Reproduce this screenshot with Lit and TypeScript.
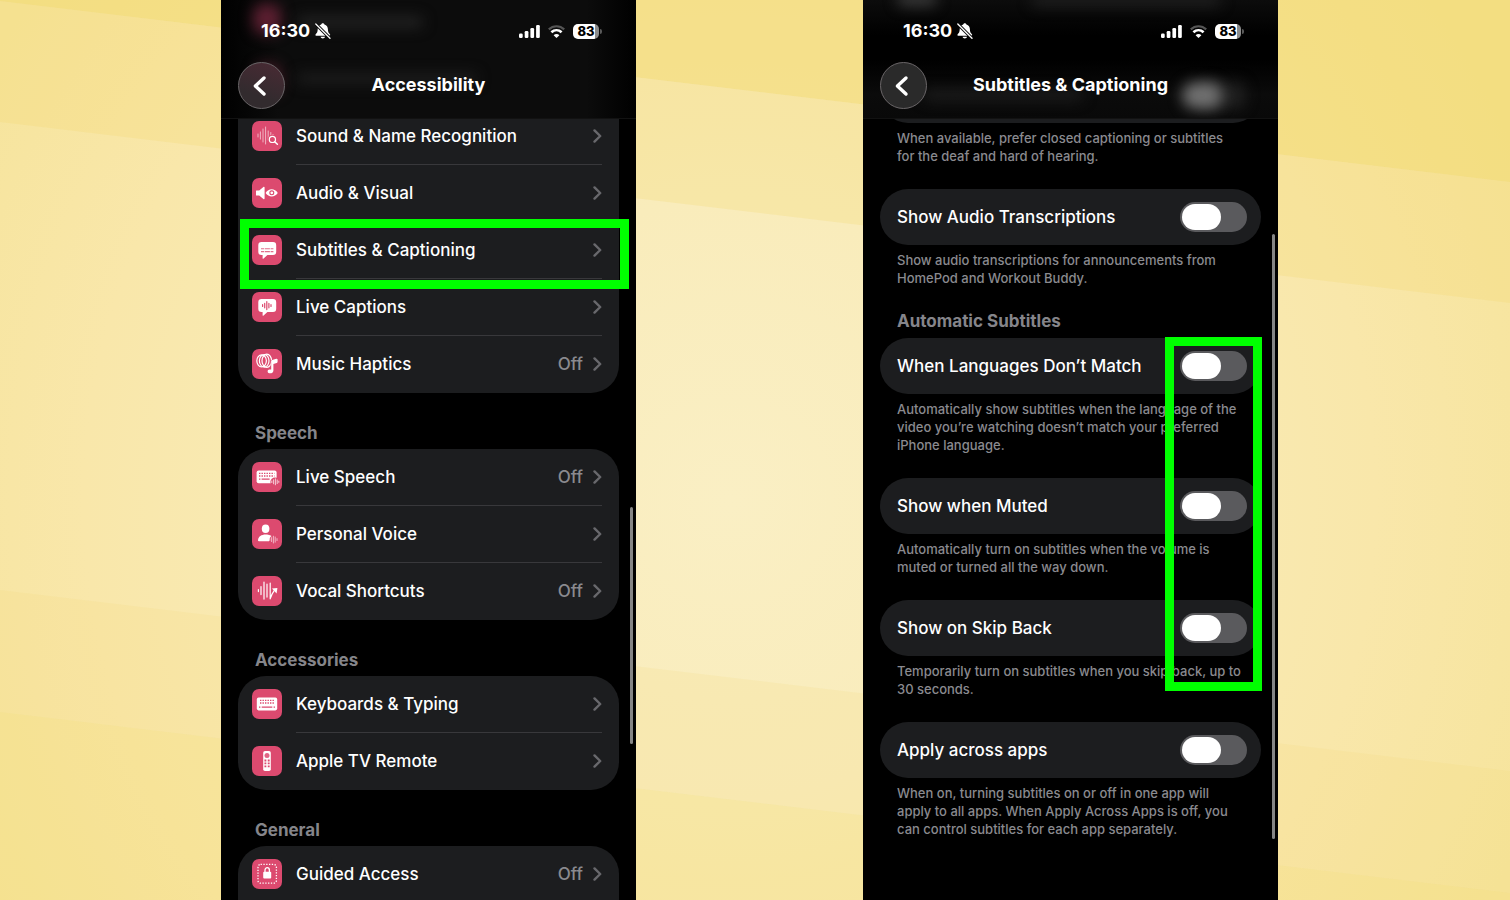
import { LitElement, html, css, svg, nothing } from "lit";
import type { TemplateResult } from "lit";
import { customElement } from "lit/decorators.js";
import { classMap } from "lit/directives/class-map.js";

interface Row {
  icon: string;
  label: string;
  value?: string;
  marked?: boolean;
}

interface Section {
  title?: string;
  rows: Row[];
  continues?: boolean;
}

interface Option {
  id: string;
  label: string;
  note: string;
}

const SECTIONS: Section[] = [
  {
    rows: [
      { icon: "recognition", label: "Sound & Name Recognition" },
      { icon: "audio", label: "Audio & Visual" },
      { icon: "subtitles", label: "Subtitles & Captioning", marked: true },
      { icon: "captions", label: "Live Captions" },
      { icon: "music", label: "Music Haptics", value: "Off" },
    ],
  },
  {
    title: "Speech",
    rows: [
      { icon: "speech", label: "Live Speech", value: "Off" },
      { icon: "voice", label: "Personal Voice" },
      { icon: "vocal", label: "Vocal Shortcuts", value: "Off" },
    ],
  },
  {
    title: "Accessories",
    rows: [
      { icon: "keyboard", label: "Keyboards & Typing" },
      { icon: "remote", label: "Apple TV Remote" },
    ],
  },
  {
    title: "General",
    continues: true,
    rows: [{ icon: "guided", label: "Guided Access", value: "Off" }],
  },
];

const TRANSCRIPTIONS: Option = {
  id: "transcriptions",
  label: "Show Audio Transcriptions",
  note: "Show audio transcriptions for announcements from HomePod and Workout Buddy.",
};

const AUTOMATIC: Option[] = [
  {
    id: "languages",
    label: "When Languages Don’t Match",
    note: "Automatically show subtitles when the language of the video you’re watching doesn’t match your preferred iPhone language.",
  },
  {
    id: "muted",
    label: "Show when Muted",
    note: "Automatically turn on subtitles when the volume is muted or turned all the way down.",
  },
  {
    id: "skip",
    label: "Show on Skip Back",
    note: "Temporarily turn on subtitles when you skip back, up to 30 seconds.",
  },
];

const ACROSS: Option = {
  id: "across",
  label: "Apply across apps",
  note: "When on, turning subtitles on or off in one app will apply to all apps. When Apply Across Apps is off, you can control subtitles for each app separately.",
};

/** Vertical strokes of a sound wave: [x, half height] around a centre line. */
const wave = (bars: number[][], cy: number, width: number, opacity = 1) => svg`
  <path d=${bars.map(([x, h]) => `M${x} ${cy - h}V${cy + h}`).join("")}
    stroke="#fff" stroke-width=${width} stroke-linecap="round" opacity=${opacity} />`;

const keys = (x: number, y: number) => svg`
  <path d=${`M${x} ${y}h14M${x} ${y + 2.6}h14`} stroke="#dc4a6f" stroke-width="1.4" stroke-dasharray="1.4 1.1" />`;

const BUBBLE = "M9.5 7H21a3.2 3.2 0 0 1 3.2 3.2v6.6A3.2 3.2 0 0 1 21 20h-5.6l-3.8 3.6c-.5.5-1 .2-1-.4V20H9.5a3.2 3.2 0 0 1-3.2-3.2v-6.6A3.2 3.2 0 0 1 9.5 7z";

const ICONS: Record<string, TemplateResult> = {
  recognition: svg`
    ${wave([[6, 1.5], [8.4, 3.6], [11, 6.5], [13.6, 8.5], [16.2, 4.5], [18.8, 3], [21, 1]], 14.5, 0.9, 0.65)}
    <circle cx="20.4" cy="18.4" r="4.6" fill="#dc4a6f" />
    <circle cx="20.4" cy="18.4" r="3.1" fill="none" stroke="#fff" stroke-width="1.2" />
    <path d="M22.7 20.7l2.7 2.6" stroke="#fff" stroke-width="1.5" stroke-linecap="round" />`,
  audio: svg`
    <path d="M4.4 12.5h2.8l4.2-3.4c.6-.5 1.2-.2 1.2.5v10.8c0 .7-.6 1-1.2.5l-4.2-3.4H4.4c-.3 0-.4-.3-.4-.6v-3.8c0-.3.1-.6.4-.6z" fill="#fff" />
    <path d="M13.6 15c3-5 9.2-5 12.2 0c-3 4.600-9.200 4.600-12.200 0z" fill="#fff" />
    <circle cx="19.8" cy="14.8" r="2.5" fill="#dc4a6f" />
    <circle cx="19.8" cy="14.8" r="1.4" fill="#fff" />`,
  subtitles: svg`
    <path d=${BUBBLE} fill="#fff" />
    <path d="M9 13.8h12.4M9 16.6h12.4" stroke="#dc4a6f" stroke-width="1.1" stroke-dasharray="3.2 .7 5 .7" opacity=".8" />`,
  captions: svg`
    <path d=${BUBBLE} fill="#fff" />
    <path d="M10.6 12.7v1.8M12.7 11.4v4.4M14.8 9.6v8M16.9 11.4v4.4M19 12.7v1.8" stroke="#dc4a6f" stroke-width="1.2" stroke-linecap="round" />`,
  music: svg`
    <g fill="none" stroke="#fff" stroke-width="1.2">
      <ellipse cx="9.6" cy="11.8" rx="4.8" ry="6" />
      <ellipse cx="12.2" cy="11.8" rx="4.8" ry="6.3" />
      <ellipse cx="14.8" cy="11.8" rx="4.8" ry="6.6" />
    </g>
    <path d="M19.2 20.4V12.2c0-.7.3-1 .9-1.200l4.200-1.200c.8-.2 1.300.1 1.300.8v2.200c0 .6-.3.900-.9 1.100l-3.300 1v6.600c0 3.600-5.800 3.800-5.800.7c0-1.900 1.900-1.800 3.600-1.800z"
      fill="#fff" stroke="#dc4a6f" stroke-width="1" paint-order="stroke" />`,
  speech: svg`
    <rect x="4.6" y="8.6" width="20" height="12.6" rx="2" fill="#fff" />
    <path d="M7 11.4h15.4M7 14h15.4" stroke="#dc4a6f" stroke-width="1.3" stroke-dasharray="1.4 1.1" />
    <path d="M7 17.2h1.4m1.2 0h8" stroke="#dc4a6f" stroke-width="1.3" />
    <circle cx="23" cy="20" r="4.6" fill="#dc4a6f" />
    ${wave([[19.8, 0.8], [21.6, 2], [23.4, 3], [25.2, 1.8], [26.8, 0.6]], 19.8, 0.9, 0.8)}`,
  voice: svg`
    <ellipse cx="13.6" cy="9.8" rx="3.8" ry="4.300" fill="#fff" />
    <path d="M6 21.400c0-4 3.600-6 7.600-6s5.400 1 6.400 2.200l-3 4.600H7c-.7 0-1-.3-1-.8z" fill="#fff" />
    <circle cx="21.8" cy="20.8" r="4.4" fill="#dc4a6f" />
    ${wave([[17.8, 0.8], [19.6, 2], [21.4, 3.4], [23.2, 2.6], [25, 1]], 20.6, 0.9, 0.65)}`,
  vocal: svg`
    ${wave([[6.4, 1], [9, 4], [12, 8.5], [15, 6.5]], 14.6, 1.2, 1)}
    <path d="M18.200 7v15.800l.6-1.600c.8-2.400 1.800-4.400 3.400-6.600" fill="none" stroke="#fff" stroke-width="1.200" stroke-linejoin="round" stroke-linecap="round" />
    <path d="M20 12.600l5.400-.6-.8 5.400z" fill="#fff" />`,
  keyboard: svg`
    <rect x="4.8" y="8.6" width="20.4" height="12.8" rx="1.8" fill="#fff" />
    ${keys(8, 11.4)}
    <path d="M7 18.2h1.4m1.300 0h10.600m1.300 0h1.400" stroke="#dc4a6f" stroke-width="1.200" />`,
  remote: svg`
    <rect x="11.2" y="5" width="7.6" height="20" rx="1.8" fill="#fff" />
    <circle cx="15" cy="9.6" r="2.5" fill="#dc4a6f" opacity=".85" />
    <path d="M13.4 13.6v7.6M16.7 13.6v7.6" stroke="#dc4a6f" stroke-width="1.9" stroke-dasharray="1.8 1.1" />`,
  guided: svg`
    <rect x="6" y="5.4" width="18.4" height="18.8" rx="2.6" fill="none" stroke="#fff" stroke-width="1.3" stroke-dasharray="1.3 1.5" />
    <rect x="11.2" y="12.8" width="8" height="6.8" rx="1" fill="#fff" />
    <path d="M13 13.4v-2.2a2.2 2.6 0 0 1 4.400 0v2.200" fill="none" stroke="#fff" stroke-width="1.3" />`,
};

@customElement("app-root")
export class AppRoot extends LitElement {
  static styles = css`
    :host {
      display: block;
      font-family: Inter, "Liberation Sans", sans-serif;
      color: #fff;
    }
    .stage {
      position: relative;
      display: grid;
      grid-template-columns: 221fr 415fr 227fr 415fr 232fr;
      height: 100vh;
      overflow: hidden;
      background: #f7e6a4;
    }
    .backdrop {
      position: absolute;
      inset: 0;
      width: 100%;
      height: 100%;
    }
    .phone {
      position: relative;
      grid-row: 1;
      display: flex;
      flex-direction: column;
      min-width: 0;
      overflow: hidden;
      background: #000;
    }
    .phone.list {
      grid-column: 2;
    }
    .phone.detail {
      grid-column: 4;
    }
    .top {
      position: relative;
      flex: none;
      display: flex;
      flex-direction: column;
      height: 119px;
      box-sizing: border-box;
      border-bottom: 1px solid #121212;
      overflow: hidden;
      z-index: 1;
      background: #000;
    }
    .list .top {
      background: linear-gradient(90deg, #000, #0c0c0c 14%, #0c0c0c 88%, #000);
    }
    .detail .top {
      background: linear-gradient(#0c0c0c, #000 30%, #000 50%, #0b0b0b 80%, #090909);
    }
    .ghost {
      position: absolute;
      border-radius: 10px;
      filter: blur(7px);
      background: #252525;
    }
    .ghost.g1 { left: 32px; top: 4px; width: 28px; height: 30px; background: #5c1f31; }
    .ghost.g2 { left: 76px; top: 17px; width: 126px; height: 10px; background: #262626; }
    .ghost.g3 { left: 34px; top: 64px; width: 26px; height: 30px; background: #4a1c29; }
    .ghost.g4 { left: 76px; top: 74px; width: 180px; height: 9px; background: #202020; }
    .ghost.g5 { left: 34px; top: -8px; width: 40px; height: 14px; background: #3a3a3a; }
    .ghost.g6 { left: 168px; top: -6px; width: 190px; height: 12px; background: #202020; }
    .ghost.g7 { left: 60px; top: 90px; width: 160px; height: 10px; background: #1e1e1e; }
    .ghost.g8 { left: 340px; top: 82px; width: 42px; height: 27px; background: #202020; }
    .ghost.g9 { left: 319px; top: 82px; width: 40px; height: 27px; border-radius: 14px; background: #707070; }
    .status {
      position: relative;
      display: flex;
      align-items: center;
      height: 62px;
      box-sizing: border-box;
      padding: 0 34px 0 40px;
    }
    .time {
      font-size: 18px;
      font-weight: 700;
      line-height: 22px;
    }
    .bell {
      margin-left: 5px;
    }
    .indicators {
      display: flex;
      align-items: center;
      gap: 8px;
      margin-left: auto;
    }
    .battery {
      display: flex;
      align-items: center;
      gap: 1px;
    }
    .level {
      width: 26px;
      height: 15px;
      border-radius: 5px;
      background: linear-gradient(90deg, #fff 85%, #8c8c8c 85%);
      color: #000;
      font-size: 13px;
      font-weight: 800;
      line-height: 15px;
      text-align: center;
    }
    .cap {
      width: 2px;
      height: 5px;
      border-radius: 0 2px 2px 0;
      background: #5a5a5a;
    }
    .nav {
      position: relative;
      display: grid;
      grid-template-columns: 47px 1fr 47px;
      align-items: center;
      padding: 0 17px;
    }
    .back {
      display: grid;
      place-items: center;
      width: 47px;
      height: 47px;
      padding: 0;
      border: 1px solid #6a6668;
      border-radius: 50%;
      background: #2a2a2a;
      color: #fff;
    }
    .list .back {
      background: linear-gradient(20deg, #322b2e 30%, #4a2a34);
    }
    .title {
      margin: 0;
      padding-bottom: 2px;
      font-size: 18px;
      font-weight: 700;
      line-height: 24px;
      text-align: center;
    }
    .body {
      flex: 1;
      min-height: 0;
      padding: 0 17px;
    }
    .list .body {
      margin-top: -11px;
    }
    .detail .body {
      margin-top: -52px;
    }
    .card {
      border-radius: 28px;
      background: #1c1d1f;
    }
    .card.open {
      border-radius: 0 0 28px 28px;
    }
    .card.continues {
      padding-bottom: 57px;
    }
    .heading {
      margin: 0;
      padding: 28px 17px 4px;
      color: #85858a;
      font-size: 17px;
      font-weight: 700;
      line-height: 24px;
    }
    .heading.auto {
      padding: 22px 17px 5px;
    }
    .row {
      position: relative;
      display: flex;
      gap: 14px;
      height: 57px;
      padding-left: 14px;
      color: inherit;
      text-decoration: none;
    }
    .glyph {
      flex: none;
      align-self: center;
      width: 30px;
      height: 30px;
      margin-bottom: 1px;
      border-radius: 7px;
      background: #dc4a6f;
    }
    .line {
      flex: 1;
      display: flex;
      align-items: center;
      gap: 10px;
      margin-right: 17px;
      border-bottom: 1px solid #38383b;
    }
    .row:last-child .line {
      border-bottom-color: transparent;
    }
    .label {
      flex: 1;
      font-size: 17px;
      font-weight: 500;
      line-height: 22px;
    }
    .value {
      color: #8a8a8f;
      font-size: 17px;
      font-weight: 500;
      line-height: 22px;
    }
    .marker {
      position: absolute;
      box-sizing: border-box;
      border: 9px solid #00ff00;
      pointer-events: none;
      z-index: 2;
    }
    .row .marker {
      inset: -3px -10px -10px 2px;
    }
    .group {
      position: relative;
    }
    .group .marker {
      top: -1px;
      right: -1px;
      bottom: 7px;
      width: 97px;
    }
    .option {
      display: flex;
      align-items: center;
      height: 56px;
      padding: 0 14px 0 17px;
    }
    .switch {
      appearance: none;
      flex: none;
      display: flex;
      width: 67px;
      height: 30px;
      box-sizing: border-box;
      margin: 0;
      padding: 2px;
      border-radius: 15px;
      background: #5a5a5d;
    }
    .switch::before {
      content: "";
      width: 39px;
      height: 26px;
      border-radius: 13px;
      background: #fff;
    }
    .switch:checked {
      justify-content: flex-end;
      background: #34c759;
    }
    .note {
      margin: 0;
      padding: 6px 17px 0;
      color: #8a8a8f;
      font-size: 13px;
      font-weight: 500;
      line-height: 18px;
    }
    .block + .block,
    .spaced {
      margin-top: 24px;
    }
    .scrollbar {
      position: absolute;
      right: 3px;
      width: 3px;
      border-radius: 2px;
      background: #858585;
      z-index: 1;
    }
    .list .scrollbar {
      top: 507px;
      height: 237px;
    }
    .detail .scrollbar {
      top: 234px;
      height: 605px;
    }
  `;

  private backdrop() {
    return html`<svg class="backdrop" viewBox="0 0 1510 900" preserveAspectRatio="none" aria-hidden="true">
      <defs>
        <radialGradient id="glow" gradientUnits="userSpaceOnUse" cx="730" cy="500" r="860">
          <stop offset="0" stop-color="#faefc4" />
          <stop offset=".35" stop-color="#f9ecbb" />
          <stop offset=".75" stop-color="#f9e7aa" />
          <stop offset="1" stop-color="#f6e49c" />
        </radialGradient>
      </defs>
      <rect width="1510" height="900" fill="url(#glow)" />
      <path d="M0 0H1510V182L0 1z" fill="#f2d96f" opacity=".58" />
      <path d="M0 1L1510 182V303L0 122z" fill="#f2d96f" opacity=".26" />
      <path d="M0 590L1510 771V893L0 712z" fill="#f2d96f" opacity=".15" />
      <path d="M0 712L1510 893V900H0z" fill="#f2d96f" opacity=".3" />
    </svg>`;
  }

  private top(title: string, ghosts: string[]) {
    return html`<header class="top">
      ${ghosts.map((g) => html`<span class="ghost ${g}"></span>`)}
      <div class="status">
        <span class="time">16:30</span>
        <svg class="bell" width="16" height="16" viewBox="0 0 16 16" aria-label="Silent">
          <path d="M7.800.2c.9 0 1.500.6 1.600 1.300 2.300.7 3.500 2.600 3.500 4.700 0 3 .9 3.700 2 5 .6.7.2 1.600-.8 1.600H1.500c-1 0-1.400-.9-.8-1.600 1.100-1.300 2-2 2-5 0-2.100 1.200-4 3.500-4.700C6.300.8 6.900.2 7.800.2zM5.600 13.700h4.400c-.2 1-1.100 1.700-2.200 1.700s-2-.7-2.200-1.700z" fill="#fff" />
          <path d="M.4 .6l15 15" stroke="#0b0b0b" stroke-width="3.200" />
          <path d="M.8 1l14.200 14.200" stroke="#fff" stroke-width="1.300" stroke-linecap="round" />
        </svg>
        <div class="indicators">
          <svg width="21" height="13" viewBox="0 0 21 13" aria-label="Signal">
            <g fill="#fff">
              <rect x="0" y="8.5" width="3.700" height="4.500" rx="1.200" />
              <rect x="5.7" y="6" width="3.700" height="7" rx="1.200" />
              <rect x="11.4" y="3" width="3.700" height="10" rx="1.200" />
              <rect x="17.1" y="0" width="3.700" height="13" rx="1.200" />
            </g>
          </svg>
          <svg width="17" height="13" viewBox="0 0 17 13" fill="none" aria-label="Wi-Fi">
            <path d="M.8 4.400c4.400-4.200 11-4.200 15.400 0" stroke="#555" stroke-width="2.200" />
            <path d="M3.400 7.300c3-2.800 7.200-2.800 10.200 0" stroke="#fff" stroke-width="2.600" />
            <path d="M8.500 13L5.600 10.200c1.500-1.500 4.300-1.500 5.800 0z" fill="#fff" />
          </svg>
          <div class="battery">
            <span class="level">83</span>
            <span class="cap"></span>
          </div>
        </div>
      </div>
      <div class="nav">
        <button class="back" type="button" aria-label="Back">
          <svg width="24" height="24" viewBox="0 0 24 24" fill="none" aria-hidden="true">
            <path d="M14 4L5.400 12L14 20" stroke="#fff" stroke-width="3.400" stroke-linecap="round" stroke-linejoin="round" />
          </svg>
        </button>
        <h1 class="title">${title}</h1>
      </div>
    </header>`;
  }

  private row(row: Row) {
    return html`<a class="row" href="#${row.icon}">
      <svg class="glyph" viewBox="0 0 30 30" aria-hidden="true">${ICONS[row.icon]}</svg>
      <span class="line">
        <span class="label">${row.label}</span>
        ${row.value ? html`<span class="value">${row.value}</span>` : nothing}
        <svg width="9" height="14" viewBox="0 0 9 14" fill="none" aria-hidden="true">
          <path d="M1.500 1.400L7.200 7L1.500 12.600" stroke="#68686c" stroke-width="2.400" stroke-linecap="round" stroke-linejoin="round" />
        </svg>
      </span>
      ${row.marked ? html`<span class="marker"></span>` : nothing}
    </a>`;
  }

  private section(section: Section) {
    const classes = { card: true, open: !section.title, continues: !!section.continues };
    return html`<section>
      ${section.title ? html`<h2 class="heading">${section.title}</h2>` : nothing}
      <div class=${classMap(classes)}>${section.rows.map((row) => this.row(row))}</div>
    </section>`;
  }

  private option(option: Option) {
    return html`<div class="block">
      <label class="card option" for=${option.id}>
        <span class="label">${option.label}</span>
        <input class="switch" id=${option.id} type="checkbox" role="switch" />
      </label>
      <p class="note">${option.note}</p>
    </div>`;
  }

  render() {
    return html`<main class="stage">
      ${this.backdrop()}
      <section class="phone list">
        ${this.top("Accessibility", ["g1", "g2", "g3", "g4"])}
        <div class="body">${SECTIONS.map((s) => this.section(s))}</div>
        <span class="scrollbar"></span>
      </section>
      <section class="phone detail">
        ${this.top("Subtitles & Captioning", ["g5", "g6", "g7", "g8", "g9"])}
        <div class="body">
          <div class="block">
            <div class="card option"></div>
            <p class="note">When available, prefer closed captioning or subtitles for the deaf and hard of hearing.</p>
          </div>
          <div class="spaced">${this.option(TRANSCRIPTIONS)}</div>
          <h2 class="heading auto">Automatic Subtitles</h2>
          <div class="group">
            ${AUTOMATIC.map((o) => this.option(o))}
            <span class="marker"></span>
          </div>
          <div class="spaced">${this.option(ACROSS)}</div>
        </div>
        <span class="scrollbar"></span>
      </section>
    </main>`;
  }
}
